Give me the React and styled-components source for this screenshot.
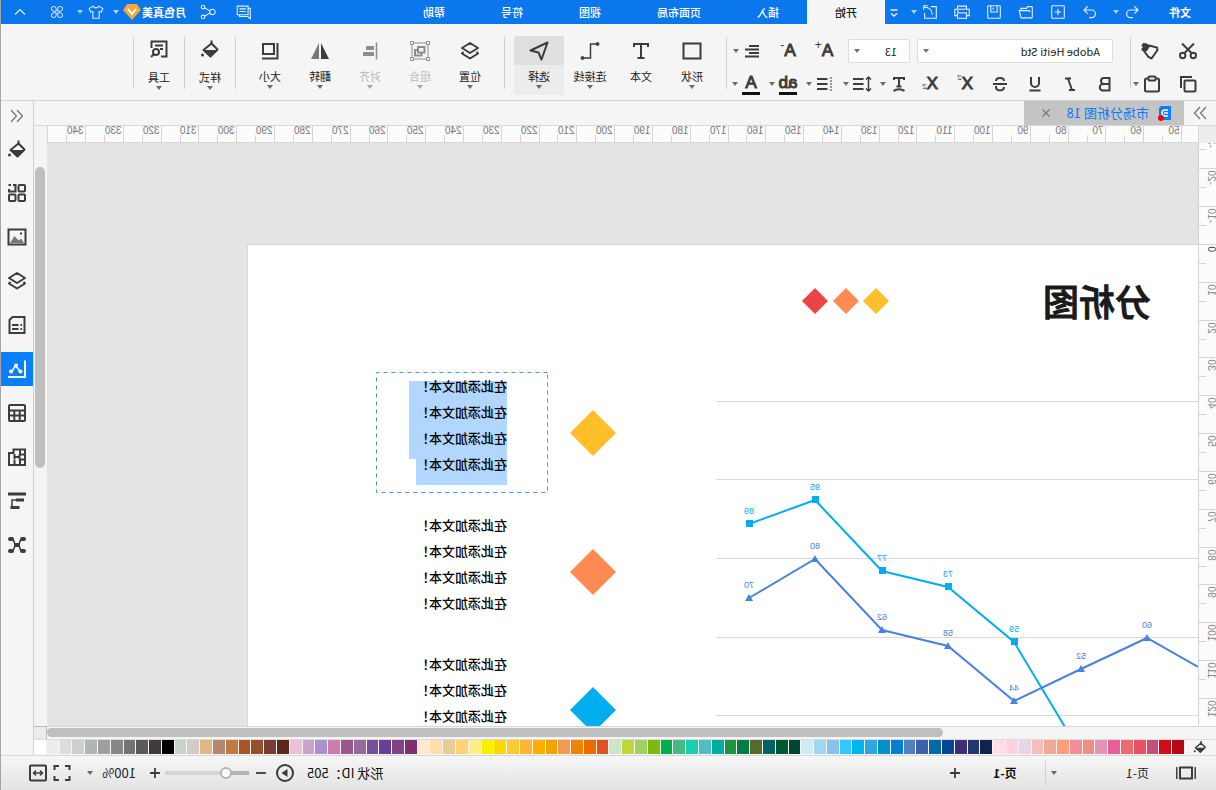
import React from "react";
import styled, { createGlobalStyle, css } from "styled-components";

const GlobalStyle = createGlobalStyle`
  * { box-sizing: border-box; }
  body { margin: 0; overflow: hidden; background: #f5f5f5; }
  button, select, input { font: inherit; color: inherit; margin: 0; }
`;

/* The whole editor is shown as a mirror image. */
const Shell = styled.div`
  display: flex;
  flex-direction: column;
  height: 100vh;
  transform: scaleX(-1);
  border-right: 1px solid #a2a4a8;
  background: #f5f5f5;
  color: #222;
  font-family: "Noto Sans CJK SC", "Noto Sans", sans-serif;
  font-size: 11px;
  line-height: 16px;
`;

/* ---------- icons ---------- */

const Svg = styled.svg`
  display: block;
  flex: none;
  fill: none;
  stroke: currentColor;
  stroke-width: ${(p) => p.$stroke};
`;

const shapes = {
  undo: <path d="M7 3 2.500 7.500 7 12M3 7.500H12a4.500 4.500 0 0 1 0 9.500H9" />,
  redo: <path d="M13 3 17.500 7.500 13 12M17 7.500H8a4.500 4.500 0 0 0 0 9.500H11" />,
  plusBox: <><rect x="3" y="3" width="14" height="14" rx="1" /><path d="M10 6.500v7M6.500 10h7" /></>,
  folder: <path d="M3 16.500V5a1 1 0 0 1 1-1h4l1.500 2H15.500v2.500M3 16.500h12.500l2-8H6.500L5.500 10" />,
  save: <><rect x="3" y="3" width="14" height="14" rx="1" /><path d="M6.500 3v7h7V3M11 5v2.500" /></>,
  print: <><path d="M5 7V3.500h10V7M5 14H2V7h16v7H15" /><rect x="5" y="11" width="10" height="6" /><path d="M13.500 9h2" /></>,
  exportBox: <path d="M9 4H3v13h13V11M7.500 13c0-5 3-8 9-8.500M12.500 3h4.500v4.500" />,
  comment: <><path d="M5.500 3.500h12v9.500h-12zM8 6.500h7M8 9.500h7" /><path d="M5.500 6H3v11.500l3-2.500h9v-2" /></>,
  share: <><circle cx="15.500" cy="4.500" r="2" /><circle cx="5" cy="10" r="3" /><circle cx="15.500" cy="15.500" r="2" /><path d="m7.500 9 6-3.500M7.500 11l6 3.500" /></>,
  shirt: <path d="M7 3.500 2.500 6 4 10l2.500-.5V17h7V9.500l2.500.5 1.500-4L13 3.500c-.5 2.500-5.500 2.500-6 0Z" />,
  petals: <path d="M9 9H6A3 3 0 1 1 9 6ZM11 9h3A3 3 0 1 0 11 6ZM9 11H6A3 3 0 1 0 9 14ZM11 11h3a3 3 0 1 1-3 3Z" />,
  up: <path d="m5 12.500 5-5 5 5" />,
  customize: <path d="M6.500 8h7M7 11.500l3 2.500 3-2.500" />,
  right2: <path d="m4 4 5.500 6L4 16M10 4l5.500 6-5.500 6" />,
  left2: <path d="m10 4-5.500 6 5.500 6M16 4l-5.500 6 5.500 6" />,
  close: <path d="m6.500 6.500 7 7M13.500 6.500l-7 7" />,
  cut: <><circle cx="4.700" cy="14.500" r="2.700" /><circle cx="15.300" cy="14.500" r="2.700" /><path d="M4 2.500 14 12.500M16 2.500 6 12.500" /></>,
  copy: <><rect x="2.500" y="6.500" width="11" height="11" rx="1" /><path d="M6 3h11V14" /></>,
  brush: <><path d="M11 4.500 3 6.500l-.5 2.500 6 8.500 3-1.500 4.500-6" /><path d="m9.500 4.500 5-2.500 4.500 6.500-3 2.500-3-1z" fill="currentColor" stroke="none" /><path d="m14.500 5.500 3-2.500" strokeWidth="4" /></>,
  paste: <><rect x="3" y="4.500" width="14" height="13" rx="1.500" /><rect x="6.500" y="2.500" width="7" height="4" rx="1" fill="#f5f5f5" /></>,
  lines: <path d="M3 5h10M3 8.500h14M3 12h10M3 15.500h14" />,
  bold: <path d="M5.500 4H11a2.800 2.800 0 0 1 0 6H5.500zM5.500 10H12a3 3 0 0 1 0 6.500H5.500z" />,
  italic: <path d="M9 4.500h6M5 16h6M12 4.500 8 16" />,
  underline: <path d="M6 3v6a4 4 0 0 0 8 0V3M4.500 16.500h11" />,
  strike: <path d="M14 7c0-4-8-4-8 0M6 13c0 4.500 8 4.500 8 0V12M3 10h14" />,
  textCurve: <path d="M5 6V4h10v2M10 4v8.500M7.500 12.500h5M4.500 17c3-2.500 8-2.500 11 0" />,
  spacing: <><path d="M3.500 3v14M1 5.500 3.500 3 6 5.500M1 14.500 3.500 17 6 14.500" strokeWidth="1.500" /><path d="M8.500 5h10.500M8.500 10h10.500M8.500 15h10.500" /></>,
  list: <><path d="M3 4h2M3 10h2M3 16h2M3 7h2M3 13h2" strokeWidth="1.200" /><path d="M7.500 5H18M7.500 10H18M7.500 15H18" /></>,
  rect: <rect x="1.500" y="2.500" width="17" height="15" />,
  type: <path d="M3 6V3h14v3M10 3v14M6.500 17h7" />,
  connector: <><path d="M4 3h5.500v14h6.500" strokeWidth="1.500" /><circle cx="2.500" cy="3" r="1.500" fill="currentColor" strokeWidth="1" /><circle cx="17.500" cy="17" r="1.500" fill="currentColor" strokeWidth="1" /></>,
  pointer: <path d="M1.500 1.500 18.500 9.500 10.500 11.500 7.500 18.500Z" strokeLinejoin="round" />,
  layers: <path d="m10 2 8 5-8 5-8-5ZM3.500 11 2 12.500l8 5 8-5L16.500 11" strokeLinejoin="round" />,
  group: <><rect x="2" y="2" width="16" height="16" strokeWidth="1" /><path d="M5.500 6h6.500v5.500H5.500zM12 9h3v5.500H8.500V12" /><path d="M.5.5h3v3h-3zM16.500.5h3v3h-3zM.5 16.500h3v3h-3zM16.500 16.500h3v3h-3z" fill="#f5f5f5" strokeWidth="1" /></>,
  align: <><path d="M3.500 1.500v17" strokeWidth="1.500" /><path d="M6 7h8M6 13h11" strokeWidth="4" /></>,
  flip: <><path d="M9 2v16H1z" fill="currentColor" stroke="none" /><path d="M11 2v16h8z" fill="#777" stroke="none" /></>,
  size: <><rect x="6" y="3" width="11" height="10" /><path d="M2.500 2v15.500H18" strokeWidth="2" /></>,
  bucket: <><path d="m8.500 4.500 8 6.500-7 6.500-7-7Z" strokeLinejoin="round" /><path d="M2.500 11h14l-7 7Z" fill="currentColor" stroke="none" /><path d="M8.500 5V1.500" /><circle cx="17.500" cy="16" r="1.500" fill="currentColor" stroke="none" /></>,
  tools: <><path d="M17.500 9V2.500h-15v15H8M6 6.500h8M6 10h3" /><circle cx="13" cy="13" r="3" /><path d="m15 15 3 3" /></>,
  blocks: <><rect x="2" y="2" width="6.500" height="6.500" rx="1" /><rect x="2" y="11.500" width="6.500" height="6.500" rx="1" /><rect x="11.500" y="11.500" width="6.500" height="6.500" rx="1" /><path d="M14 2h-2.500v6.500H18V6M16 2h2.500" /></>,
  image: <><rect x="1.500" y="2.500" width="17" height="15" /><path d="m3 16 3-4.500 2.500 2 4-4.500L17 16Z" fill="#777" stroke="none" /><path d="M5 6.500h2" /></>,
  doc: <path d="M2.500 2h12L17.500 5v13h-15zM5 10h1.500M8.500 10H15M5 14h1.500M8.500 14H15" />,
  chart: <><path d="M2 1.500V18h17" /><path d="m6.500 13 5-6.500 4 6.500" strokeWidth="1.500" /><g fill="currentColor" stroke="none"><circle cx="6.500" cy="12.500" r="2" /><circle cx="11" cy="6.500" r="2" /><circle cx="16" cy="12.500" r="2" /></g></>,
  table: <><rect x="2" y="2" width="16" height="16" rx="1" /><path d="M2 7.500h16M2 12.500h16M7.300 8v10M12.700 8v10" /></>,
  floor: <path d="M2 2.500h11.500V6H18v12H2zM2 7.500h5V2.500M2 12.500h5V18M7.500 7.500v5M7.500 10h5M12.500 12.500V18M12.500 7v5" />,
  gantt: <><path d="M1 3h18M3 9h8M7.500 16.500h9" strokeWidth="3" /><path d="M11 9h4v7" strokeWidth="1.500" /></>,
  mind: <><path d="M4 4c5 0 1.500 6 6 6 4.500 0 1-6 6-6M4 16c5 0 1.500-6 6-6 4.500 0 1 6 6 6" strokeWidth="1.500" /><g fill="currentColor" stroke="none"><rect x="1" y="2" width="6" height="4" rx="2" /><rect x="13" y="2" width="6" height="4" rx="2" /><rect x="1" y="14" width="6" height="4" rx="2" /><rect x="13" y="14" width="6" height="4" rx="2" /><rect x="7" y="8" width="6" height="4" rx="1" /></g></>,
  film: <><rect x="4" y="4.500" width="12" height="11" /><path d="M.8 4v12M19.200 4v12" strokeWidth="1.500" /></>,
  plus: <path d="M10 4.500v11M4.500 10h11" />,
  minus: <path d="M4.500 10h11" />,
  play: <><circle cx="10" cy="10" r="8" /><path d="m7.500 6 6 4-6 4z" fill="currentColor" stroke="none" /></>,
  full: <path d="M2.500 7V3h4.500M13 3h4.500v4M17.500 13v4H13M7 17H2.500v-4" />,
  fit: <><rect x="2" y="2.500" width="16" height="15" rx="1" /><path d="M5.500 10h9M8 7.500 5.500 10 8 12.500M12 7.500l2.500 2.500-2.500 2.500" strokeWidth="1.500" /></>,
};

const Icon = ({ name, size = 18, stroke = 2 }) => (
  <Svg $stroke={stroke} width={size} height={size} viewBox="0 0 20 20" aria-hidden="true">
    {shapes[name]}
  </Svg>
);

const Caret = styled.span`
  flex: none;
  width: 8px;
  height: 4px;
  background: currentColor;
  clip-path: polygon(1px 0, 7px 0, 4px 4px);
  opacity: 0.75;
`;

const IconButton = styled.button`
  display: flex;
  align-items: center;
  justify-content: center;
  flex: none;
  width: ${(p) => p.$w || 20}px;
  height: 24px;
  padding: 0;
  border: 0;
  background: none;
  color: inherit;
  margin-right: ${(p) => p.$after || 0}px;
`;

const CaretButton = styled(IconButton)`
  width: 8px;
`;

/* ---------- title bar ---------- */

const TitleBar = styled.header`
  display: flex;
  align-items: center;
  height: 24px;
  flex: none;
  background: #0a77ec;
  color: #e6f1fd;
`;

const FileButton = styled.button`
  width: 72px;
  height: 24px;
  padding: 0;
  border: 0;
  background: none;
  color: #fff;
  font-weight: 700;
`;

const QuickBar = styled.div`
  display: flex;
  gap: 12px;
  margin: 0 5px 0 2px;
`;

const Pair = styled.div`
  display: flex;
  align-items: center;
  gap: ${(p) => (p.$tight ? 0 : 2)}px;
`;

const MenuTabs = styled.nav`
  display: flex;
  flex: 1;
`;

const MenuTab = styled.button`
  height: 24px;
  padding: 0 28px;
  border: 0;
  font-weight: 500;
  background: ${(p) => (p.$active ? "#f5f5f5" : "none")};
  color: ${(p) => (p.$active ? "#222" : "#fff")};
`;

const UserName = styled.span`
  color: #fff;
  font-weight: 700;
`;

const UserTools = styled.div`
  display: flex;
  align-items: center;
  padding-right: 9px;
`;

/* ---------- ribbon ---------- */

const Ribbon = styled.div`
  display: flex;
  flex: none;
  height: 77px;
  border-bottom: 1px solid #d4d4d4;
  color: #3c3c3c;
`;

const Separator = styled.div`
  flex: none;
  width: 1px;
  height: 52px;
  margin: 13px ${(p) => p.$after || 0}px 0 ${(p) => p.$before || 0}px;
  background: #cfcfcf;
`;

const ToolRows = styled.div`
  display: flex;
  flex-direction: column;
  gap: 9px;
  padding: 15px 0 0 ${(p) => p.$left}px;
  width: ${(p) => p.$w}px;
  flex: none;
`;

const ToolRow = styled.div`
  display: flex;
  align-items: center;
  gap: ${(p) => p.$gap}px;
  padding-left: ${(p) => p.$indent || 0}px;
`;

const SelectBox = styled.label`
  display: flex;
  align-items: center;
  width: ${(p) => p.$w}px;
  height: 24px;
  padding-right: 4px;
  border: 1px solid #dcdcdc;
  border-radius: 2px;
  background: #fff;
  color: #444;
`;

const Select = styled.select`
  flex: 1;
  min-width: 0;
  height: 20px;
  padding: 0 0 0 ${(p) => p.$pad || 0}px;
  border: 0;
  outline: 0;
  appearance: none;
  background: transparent;
  color: #222;
`;

const InkButton = styled(IconButton)`
  width: 24px;
  font-size: 17px;
  line-height: 18px;
  font-weight: 500;
  font-family: "Liberation Sans", Arial, sans-serif;
  -webkit-text-stroke: 1px currentColor;
  ${(p) =>
    p.$bar &&
    css`
      height: 22px;
      line-height: 17px;
      border-bottom: 3px solid #111;
      width: 18px;
      margin: 0 3px;
    `}
`;

const Mark = styled.sup`
  align-self: flex-start;
  font-size: ${(p) => (p.$small ? 8 : 12)}px;
  line-height: ${(p) => (p.$low ? 30 : 12)}px;
  -webkit-text-stroke: 0;
`;

const BigGroup = styled.div`
  display: flex;
  gap: ${(p) => p.$gap || 0}px;
  padding-top: ${(p) => (p.$tall ? 8 : 12)}px;
`;

const BigButton = styled.button`
  display: flex;
  flex-direction: column;
  align-items: center;
  width: 50px;
  height: ${(p) => (p.$tall ? 63 : 59)}px;
  padding: 0;
  border: 0;
  border-radius: 2px;
  background: ${(p) => (p.$active ? "linear-gradient(#dfdfdf 29px, #ececec 29px)" : "none")};
  color: ${(p) => (p.$off ? "#8d8d8d" : "#3c3c3c")};
`;

const BigIcon = styled.span`
  display: flex;
  align-items: center;
  height: ${(p) => (p.$tall ? 34 : 29)}px;
`;

const BigLabel = styled.span`
  height: 20px;
  line-height: 22px;
  color: ${(p) => (p.$off ? "#b9b9b9" : "#222")};
`;

/* ---------- work area ---------- */

const Work = styled.div`
  display: flex;
  flex: 1;
  min-height: 0;
`;

const Editor = styled.main`
  display: grid;
  flex: 1;
  min-width: 0;
  grid-template-columns: 18px minmax(0, 1fr) 13px;
  grid-template-rows: 25px 17px minmax(0, 1fr) 13px 16px;
`;

const DocTabs = styled.div`
  grid-column: 1 / -1;
  display: flex;
  align-items: center;
  border-bottom: 1px solid #d8d8d8;
  color: #777;
`;

const DocTab = styled.div`
  display: flex;
  align-items: center;
  width: 160px;
  height: 24px;
  padding-left: 12px;
  background: #c4c4c4;
`;

const DocName = styled.span`
  flex: 1;
  padding-left: 9px;
  font-size: 13px;
  color: #0a7bff;
  white-space: nowrap;
`;

const RulerCorner = styled.div`
  background: #ededed;
  border-right: 1px solid #d8d8d8;
`;

const HRuler = styled.svg`
  width: 100%;
  height: 17px;
  display: block;
  background: #fbfbfb;
  font-family: "Liberation Sans", Arial, sans-serif;
  font-size: 10px;
`;

const VRuler = styled(HRuler)`
  width: 18px;
  height: 100%;
`;

const Canvas = styled.section`
  position: relative;
  overflow: hidden;
  background: #e4e4e4;
`;

const Page = styled.div`
  position: absolute;
  left: 0;
  top: 101px;
  width: 951px;
  height: 900px;
  background: #fff;
  border: 1px solid #d8d8d8;
  border-left: 0;
`;

const Title = styled.h1`
  position: absolute;
  left: 47px;
  top: 28px;
  margin: 0;
  font-size: 36px;
  line-height: 54px;
  font-weight: 500;
  -webkit-text-stroke: 1px currentColor;
  color: #1a1a1a;
`;

const Drawing = styled.svg`
  position: absolute;
  inset: 0;
  width: 100%;
  height: 100%;
  font-family: "Liberation Sans", Arial, sans-serif;
  font-size: 9px;
`;

const NoteBox = styled.div`
  position: absolute;
  left: 650px;
  top: ${(p) => p.$top}px;
  width: 172px;
  height: 121px;
  padding: 9px 0 0 41px;
`;

const NoteLine = styled.p`
  width: ${(p) => (p.$tail ? 98 : 91)}px;
  height: 26px;
  margin: 0;
  font-size: 13px;
  line-height: 10px;
  font-weight: 500;
  white-space: nowrap;
  color: #000;
  background: ${(p) => (p.$selected ? "#b1d6ff" : "none")};
`;

const VScroll = styled.div`
  grid-row: 2 / 4;
  grid-column: 3;
  padding: 41px 1px 0 2px;
  background: #f4f4f4;
`;

const VThumb = styled.div`
  height: 301px;
  border-radius: 5px;
  background: #bfbfbf;
`;

const HScroll = styled.div`
  grid-column: 1 / 3;
  display: flex;
  padding: 1px 0 2px 273px;
  border-top: 1px solid #d8d8d8;
  background: #f4f4f4;
`;

const HThumb = styled.div`
  flex: 1;
  border-radius: 5px;
  background: #bfbfbf;
`;

const ScrollCorner = styled.div`
  border-top: 1px solid #bbb;
  border-left: 1px solid #bbb;
  background: #ebebeb;
`;

const PaletteRow = styled.div`
  grid-column: 1 / -1;
  display: flex;
  border-top: 1px solid #dcdcdc;
  padding-left: 9px;
  color: #3c3c3c;
`;

const Palette = styled.div`
  flex: 1;
  display: grid;
  grid-template-columns: repeat(90, minmax(0, 1fr));
  column-gap: 1px;
  height: 14px;
  margin-left: 9px;
`;

const Swatch = styled.button`
  padding: 0;
  border: 0;
  background: ${(p) => p.$c};
`;

const Side = styled.aside`
  display: flex;
  flex-direction: column;
  flex: none;
  width: 33px;
  border-left: 1px solid #cfcfcf;
  color: #3c3c3c;
`;

const SideButton = styled.button`
  display: flex;
  align-items: center;
  justify-content: center;
  width: 32px;
  height: ${(p) => (p.$head ? 30 : 34)}px;
  margin-bottom: ${(p) => (p.$head ? 1 : 10)}px;
  padding: 0;
  border: 0;
  background: ${(p) => (p.$active ? "#0a7fff" : "none")};
  color: ${(p) => (p.$active ? "#fff" : p.$head ? "#777" : "inherit")};
`;

/* ---------- status bar ---------- */

const StatusBar = styled.footer`
  display: flex;
  align-items: center;
  flex: none;
  height: 35px;
  padding: 0 27px 0 20px;
  border-top: 1px solid #d8d8d8;
  background: linear-gradient(#f6f6f6, #e3e3e3);
  color: #3c3c3c;
  font-size: 12px;
`;

const PageSelect = styled.label`
  display: flex;
  align-items: center;
  width: 131px;
  height: 24px;
  padding: 0 4px 0 27px;
  border-right: 1px solid #d0d0d0;
`;

const PageTab = styled.button`
  width: 80px;
  padding: 0;
  border: 0;
  background: none;
  color: #111;
  font-weight: 700;
`;

const ShapeId = styled.span`
  margin: 0 12px 0 auto;
  font-size: 13px;
  color: #111;
`;

const Slider = styled.input`
  appearance: none;
  width: 84px;
  height: 12px;
  background: linear-gradient(90deg, #b4b4b4 22px, #d4d4d4 22px) center / 100% 4px no-repeat;
  border-radius: 2px;
  &::-webkit-slider-thumb {
    appearance: none;
    width: 12px;
    height: 12px;
    border: 2px solid #b4b4b4;
    border-radius: 50%;
    background: #fff;
  }
`;

const ZoomSelect = styled.label`
  display: flex;
  align-items: center;
  width: 50px;
  margin: 0 14px 0 9px;
  font-size: 13px;
`;

/* ---------- data ---------- */

const colors = (
  "b60918 d70a1c c74e78 e85363 ec6b70 e75e9d e194b4 ef8d89 f28e9b ff9f79 f0aa93 f8bdba e9d3e9 ffd2e3 ffdfe4 " +
  "0f2350 22396f 402d78 054a90 0069a8 3d62ad 5080c1 0080d2 0090d0 2ba8e0 00b5f1 31c9fb 8ac1ec a0d8ef cdeaf5 " +
  "004536 005830 00635f 556b2e 007d46 1e933e 00ada0 51bdc3 1bceb3 48ba80 00ae4f 7fb80e a3cf62 bfd73c cce7c8 " +
  "e35022 ec6c00 f08300 f49953 f1a400 ffae00 ffb733 fbca34 ffd800 ffed00 fcf084 fed371 e9cc98 ffdeac fde9d2 " +
  "7c316e 834085 673f98 745297 98699e 9c588c ce7bae a991d2 c8a3c8 edbfd9 5c281a 773c33 95502b a95528 c27a40 " +
  "b4876f deb887 d3cbc5 cad3ca 000000 403a3a 5a5a5a 727272 878787 9da09e b1b5b3 cdcfce dcdcdc ececec ffffff"
).split(" ");

/* x, y on the page, value */
const cyan = [[449, 279, 89], [383, 255, 95], [316, 326, 77], [250, 342, 73], [184, 397, 59]];
const blue = [[449, 353, 70], [383, 314, 80], [316, 385, 62], [250, 401, 58], [184, 456, 44], [117, 424, 52], [51, 393, 60]];
const path = (points, tail) => [...points, tail].map(([x, y]) => `${x},${y}`).join(" ");

const sideTools = [
  ["bucket", "填充"], ["blocks", "符号库"], ["image", "图片"], ["layers", "图层"], ["doc", "页面"],
  ["chart", "图表"], ["table", "表格"], ["floor", "平面图"], ["gantt", "甘特图"], ["mind", "思维导图"],
];

const Diamond = ({ x, y, r, fill }) => (
  <path d={`M${x} ${y - r}l${r} ${r}l${-r} ${r}l${-r} ${-r}z`} fill={fill} />
);

const HorizontalScale = () => {
  const marks = [];
  for (let v = 50; v <= 350; v += 5) {
    const x = Math.round(16 + (v - 50) * 3.779) + 0.5;
    marks.push(
      <g key={v}>
        <path d={`M${x} ${v % 10 ? 9 : 0}V17`} stroke="#d4d4d4" />
        {v % 10 === 0 && v < 350 && <text x={x + 2} y="8" fill="#777">{v}</text>}
      </g>
    );
  }
  return (
    <HRuler>
      {marks}
      <path d="M0 16.500H3000" stroke="#d8d8d8" />
    </HRuler>
  );
};

const VerticalScale = () => {
  const marks = [];
  for (let v = -30; v <= 120; v += 5) {
    const y = Math.round(101 + v * 3.783) + 0.5;
    marks.push(
      <g key={v}>
        <path d={`M${v % 10 ? 10 : 0} ${y}H18`} stroke="#d4d4d4" />
        {v % 10 === 0 && (
          <text transform={`translate(8 ${y + 2}) rotate(-90)`} textAnchor="end" fill={v ? "#888" : "#444"}>{v}</text>
        )}
      </g>
    );
  }
  return (
    <VRuler>
      {marks}
      <path d="M17.500 0V3000" stroke="#d4d4d4" />
    </VRuler>
  );
};

const Big = ({ icon, label, off, active, tall, caret = true, size = 20 }) => (
  <BigButton $off={off} $active={active} $tall={tall} disabled={off}>
    <BigIcon $tall={tall}><Icon name={icon} size={size} /></BigIcon>
    <BigLabel $off={off}>{label}</BigLabel>
    {caret && <Caret />}
  </BigButton>
);

const Note = ({ top, selected }) => (
  <NoteBox $top={top}>
    {[0, 1, 2, 3].map((i) => (
      <NoteLine key={i} $selected={selected} $tail={i < 3}>在此添加文本！</NoteLine>
    ))}
  </NoteBox>
);

const Tool = ({ name, label, ...rest }) => (
  <IconButton aria-label={label} $w={24} {...rest}><Icon name={name} size={20} /></IconButton>
);

const ToolWithMenu = ({ label, children }) => (
  <Pair $tight>
    {children}
    <CaretButton aria-label={label}><Caret /></CaretButton>
  </Pair>
);

export default function App() {
  return (
    <>
      <GlobalStyle />
      <Shell>
        <TitleBar>
          <FileButton>文件</FileButton>
          <QuickBar>
            <Pair>
              <IconButton aria-label="撤销"><Icon name="undo" stroke={1.5} size={16} /></IconButton>
              <CaretButton aria-label="撤销列表"><Caret /></CaretButton>
            </Pair>
            <IconButton aria-label="恢复"><Icon name="redo" stroke={1.5} size={16} /></IconButton>
            <IconButton aria-label="新建"><Icon name="plusBox" stroke={1.2} /></IconButton>
            <IconButton aria-label="打开"><Icon name="folder" stroke={1.2} /></IconButton>
            <IconButton aria-label="保存"><Icon name="save" stroke={1.2} /></IconButton>
            <IconButton aria-label="打印"><Icon name="print" stroke={1.2} /></IconButton>
            <Pair>
              <IconButton aria-label="导出"><Icon name="exportBox" stroke={1.2} /></IconButton>
              <CaretButton aria-label="导出列表"><Caret /></CaretButton>
            </Pair>
            <CaretButton aria-label="自定义"><Icon name="customize" stroke={1.5} size={20} /></CaretButton>
          </QuickBar>
          <MenuTabs>
            {["开始", "插入", "页面布局", "视图", "符号", "帮助"].map((t, i) => (
              <MenuTab key={t} $active={i === 0}>{t}</MenuTab>
            ))}
          </MenuTabs>
          <UserTools>
            <IconButton aria-label="评论" $after={16}><Icon name="comment" stroke={1.2} /></IconButton>
            <IconButton aria-label="分享" $after={12}><Icon name="share" stroke={1.2} /></IconButton>
            <UserName>月色真美</UserName>
            <IconButton aria-label="会员" $after={2}>
              <svg width="18" height="16" viewBox="0 0 18 16" aria-hidden="true">
                <path d="M4 0h10l4 6-9 10L0 6z" fill="#f3a93c" />
                <path d="m5 5 4 5 4-5" fill="none" stroke="#fff" strokeWidth="2" />
              </svg>
            </IconButton>
            <CaretButton aria-label="账户" $after={6}><Caret /></CaretButton>
            <IconButton aria-label="主题" $after={2}><Icon name="shirt" stroke={1.2} /></IconButton>
            <CaretButton aria-label="主题列表" $after={9}><Caret /></CaretButton>
            <IconButton aria-label="应用" $after={17}><Icon name="petals" stroke={1.2} size={16} /></IconButton>
            <IconButton aria-label="收起"><Icon name="up" stroke={1.2} size={20} /></IconButton>
          </UserTools>
        </TitleBar>

        <Ribbon>
          <ToolRows $left={16} $w={85}>
            <ToolRow $gap={14}>
              <Tool name="cut" label="剪切" />
              <Tool name="brush" label="格式刷" />
            </ToolRow>
            <ToolRow $gap={12}>
              <Tool name="copy" label="复制" />
              <ToolWithMenu label="粘贴选项"><Tool name="paste" label="粘贴" /></ToolWithMenu>
            </ToolRow>
          </ToolRows>
          <Separator />
          <ToolRows $left={13} $w={394}>
            <ToolRow $gap={12} $indent={4}>
              <ToolRow $gap={7}>
                <SelectBox $w={196}>
                  <Select aria-label="字体" $pad={12}><option>Adobe Heiti Std</option></Select>
                  <Caret />
                </SelectBox>
                <SelectBox $w={62}>
                  <Select aria-label="字号" $pad={12}><option>13</option></Select>
                  <Caret />
                </SelectBox>
              </ToolRow>
              <InkButton aria-label="增大字号">A<Mark>+</Mark></InkButton>
              <InkButton aria-label="减小字号">A<Mark>-</Mark></InkButton>
              <ToolWithMenu label="对齐选项"><Tool name="lines" label="对齐方式" /></ToolWithMenu>
            </ToolRow>
            <ToolRow $gap={7}>
              <ToolRow $gap={11}>
                <Tool name="bold" label="加粗" />
                <Tool name="italic" label="斜体" />
                <Tool name="underline" label="下划线" />
                <Tool name="strike" label="删除线" />
                <InkButton aria-label="上标">X<Mark $small>2</Mark></InkButton>
                <InkButton aria-label="下标">X<Mark $small $low>2</Mark></InkButton>
              </ToolRow>
              <ToolRow $gap={5}>
                <ToolWithMenu label="效果选项"><Tool name="textCurve" label="文本效果" /></ToolWithMenu>
                <ToolWithMenu label="行距选项"><Tool name="spacing" label="行距" /></ToolWithMenu>
                <ToolWithMenu label="列表选项"><Tool name="list" label="列表" /></ToolWithMenu>
                <ToolWithMenu label="高亮选项"><InkButton $bar aria-label="高亮">ab</InkButton></ToolWithMenu>
                <ToolWithMenu label="颜色选项"><InkButton $bar aria-label="字体颜色">A</InkButton></ToolWithMenu>
              </ToolRow>
            </ToolRow>
          </ToolRows>
          <Separator $before={9} $after={9} />
          <BigGroup $gap={1}>
            <Big icon="rect" label="形状" />
            <Big icon="type" label="文本" caret={false} />
            <Big icon="connector" label="连接线" />
            <Big icon="pointer" label="选择" active />
          </BigGroup>
          <Separator $before={9} $after={9} />
          <BigGroup>
            <Big icon="layers" label="位置" />
            <Big icon="group" label="组合" off />
            <Big icon="align" label="对齐" off />
            <Big icon="flip" label="翻转" />
            <Big icon="size" label="大小" />
          </BigGroup>
          <Separator $before={9} />
          <BigGroup $tall><Big icon="bucket" label="样式" tall /></BigGroup>
          <Separator />
          <BigGroup $tall><Big icon="tools" label="工具" tall /></BigGroup>
          <Separator />
        </Ribbon>

        <Work>
          <Editor>
            <DocTabs>
              <IconButton aria-label="展开" $w={32}><Icon name="right2" stroke={1.3} size={20} /></IconButton>
              <DocTab>
                <svg width="14" height="16" viewBox="0 0 14 16" aria-hidden="true">
                  <path d="M1 1h10l2 2v12H1z" fill="#0a7fff" />
                  <path d="M4 5h3a3 3 0 0 1 0 6H4M4 8h4" fill="none" stroke="#fff" strokeWidth="1.500" />
                  <circle cx="11" cy="13" r="3" fill="#f00" />
                </svg>
                <DocName>市场分析图 18</DocName>
                <IconButton aria-label="关闭" $after={12}><Icon name="close" stroke={1.2} size={20} /></IconButton>
              </DocTab>
            </DocTabs>
            <RulerCorner />
            <HorizontalScale />
            <VScroll><VThumb /></VScroll>
            <VerticalScale />
            <Canvas>
              <Page>
                <Drawing>
                  {[157, 235, 314, 393, 471].map((y) => (
                    <path key={y} d={`M0 ${y - 0.5}H482`} stroke="#d9d9d9" />
                  ))}
                  <Diamond x={322} y={56} r={13} fill="#ffbf2b" />
                  <Diamond x={352} y={56} r={13} fill="#ff8a52" />
                  <Diamond x={383} y={56} r={13} fill="#e94446" />
                  <Diamond x={605} y={188} r={23} fill="#ffbf2b" />
                  <Diamond x={605} y={327} r={23} fill="#ff8a52" />
                  <Diamond x={605} y={465} r={23} fill="#00aeef" />
                  <polyline points={path(blue, [0, 422])} fill="none" stroke="#4a82dc" strokeWidth="2" />
                  <polyline points={path(cyan, [133, 482])} fill="none" stroke="#00aeef" strokeWidth="2" />
                  {blue.map(([x, y, v]) => (
                    <g key={v} fill="#4a82dc">
                      <path d={`M${x} ${y - 4}l4 7h-8z`} />
                      <text x={x} y={y - 10} textAnchor="middle">{v}</text>
                    </g>
                  ))}
                  {cyan.map(([x, y, v]) => (
                    <g key={v} fill="#00aeef">
                      <rect x={x - 4} y={y - 4} width="7" height="7" />
                      <text x={x} y={y - 10} textAnchor="middle">{v}</text>
                    </g>
                  ))}
                  <rect x="650.500" y="127.500" width="171" height="120" fill="none" stroke="#4a90e2" strokeDasharray="4 4" />
                </Drawing>
                <Title>分析图</Title>
                <Note top={127} selected />
                <Note top={266} />
                <Note top={405} />
              </Page>
            </Canvas>
            <HScroll><HThumb /></HScroll>
            <ScrollCorner />
            <PaletteRow>
              <Icon name="bucket" size={14} />
              <Palette>
                {colors.map((c) => <Swatch key={c} $c={`#${c}`} aria-label={`#${c}`} />)}
              </Palette>
            </PaletteRow>
          </Editor>
          <Side>
            <SideButton $head aria-label="收起面板"><Icon name="left2" stroke={1.3} size={20} /></SideButton>
            {sideTools.map(([icon, label]) => (
              <SideButton key={icon} aria-label={label} $active={icon === "chart"}>
                <Icon name={icon} size={20} />
              </SideButton>
            ))}
          </Side>
        </Work>

        <StatusBar>
          <IconButton aria-label="页面视图"><Icon name="film" size={20} /></IconButton>
          <PageSelect>
            <Select aria-label="页面"><option>页-1</option></Select>
            <Caret />
          </PageSelect>
          <PageTab>页-1</PageTab>
          <IconButton aria-label="添加页面"><Icon name="plus" /></IconButton>
          <ShapeId>形状 ID：505</ShapeId>
          <IconButton aria-label="播放" $after={4}><Icon name="play" size={20} /></IconButton>
          <IconButton aria-label="缩小" $after={2}><Icon name="minus" /></IconButton>
          <Slider type="range" aria-label="缩放" min="0" max="100" defaultValue="23" />
          <IconButton aria-label="放大"><Icon name="plus" /></IconButton>
          <ZoomSelect>
            <Select aria-label="缩放比例"><option>100%</option></Select>
            <Caret />
          </ZoomSelect>
          <IconButton aria-label="全屏" $after={4}><Icon name="full" size={20} /></IconButton>
          <IconButton aria-label="适合宽度"><Icon name="fit" size={20} /></IconButton>
        </StatusBar>
      </Shell>
    </>
  );
}
